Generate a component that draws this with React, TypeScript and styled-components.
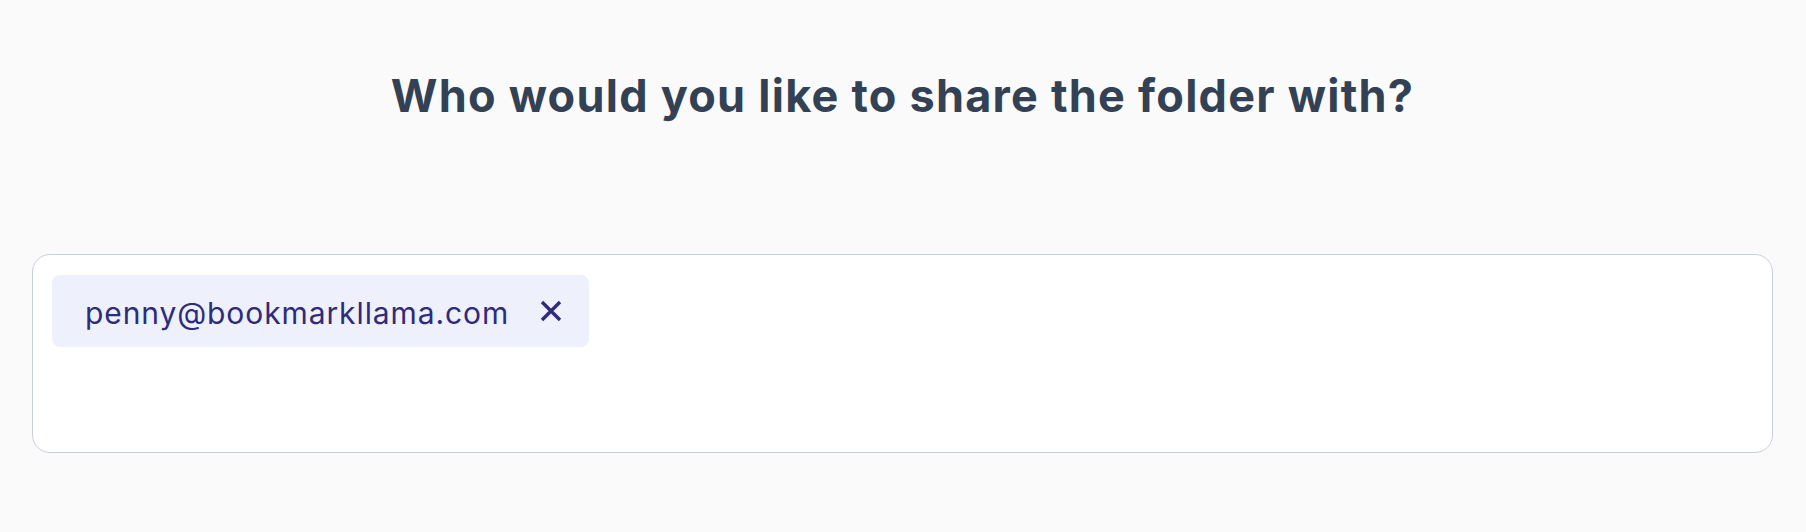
import React from "react";
import styled, { createGlobalStyle } from "styled-components";

const GlobalStyle = createGlobalStyle`
  html, body {
    margin: 0;
    padding: 0;
    background: #fafafa;
  }
  body {
    font-family: Inter, "Open Sans", sans-serif;
  }
`;

const Page = styled.main`
  box-sizing: border-box;
  width: 100%;
  height: 532px;
  padding: 0 33px 0 32px;
  display: flex;
  flex-direction: column;
  background: #fafafa;
`;

const Heading = styled.h1`
  margin: 0;
  padding-top: 68px;
  height: 254px;
  box-sizing: border-box;
  text-align: center;
  font-family: Inter, sans-serif;
  font-weight: 700;
  font-size: 45px;
  line-height: 56px;
  letter-spacing: 1.25px;
  color: #334155;
`;

const RecipientBox = styled.div`
  box-sizing: border-box;
  height: 199px;
  border: 1.5px solid #c8cedc;
  border-radius: 18px;
  background: #ffffff;
  padding: 20px 19px;
  display: flex;
  flex-wrap: wrap;
  align-items: flex-start;
  align-content: flex-start;
  gap: 12px;
`;

const Tag = styled.div`
  box-sizing: border-box;
  height: 72px;
  display: flex;
  align-items: center;
  gap: 31px;
  padding: 3px 27px 0 33px;
  border-radius: 8px;
  background: #eef0fc;
  color: #2f2b7c;
`;

const TagLabel = styled.span`
  font-family: Inter, sans-serif;
  font-size: 30px;
  font-weight: 400;
  letter-spacing: 0.9px;
  line-height: 32px;
`;

const RemoveButton = styled.button`
  border: 0;
  background: transparent;
  padding: 0;
  margin: 0 0 3px 0;
  width: 22px;
  height: 22px;
  display: flex;
  align-items: center;
  justify-content: center;
  color: inherit;
  cursor: pointer;
`;

const CloseIcon = () => (
  <svg width="22" height="22" viewBox="0 0 22 22" fill="none">
    <path d="M2 2 L20 20 M20 2 L2 20" stroke="currentColor" strokeWidth="3.4" strokeLinecap="butt" />
  </svg>
);

export default function App() {
  return (
    <>
      <GlobalStyle />
      <Page>
        <Heading>Who would you like to share the folder with?</Heading>
        <RecipientBox>
          <Tag>
            <TagLabel>penny@bookmarkllama.com</TagLabel>
            <RemoveButton aria-label="Remove penny@bookmarkllama.com">
              <CloseIcon />
            </RemoveButton>
          </Tag>
        </RecipientBox>
      </Page>
    </>
  );
}
